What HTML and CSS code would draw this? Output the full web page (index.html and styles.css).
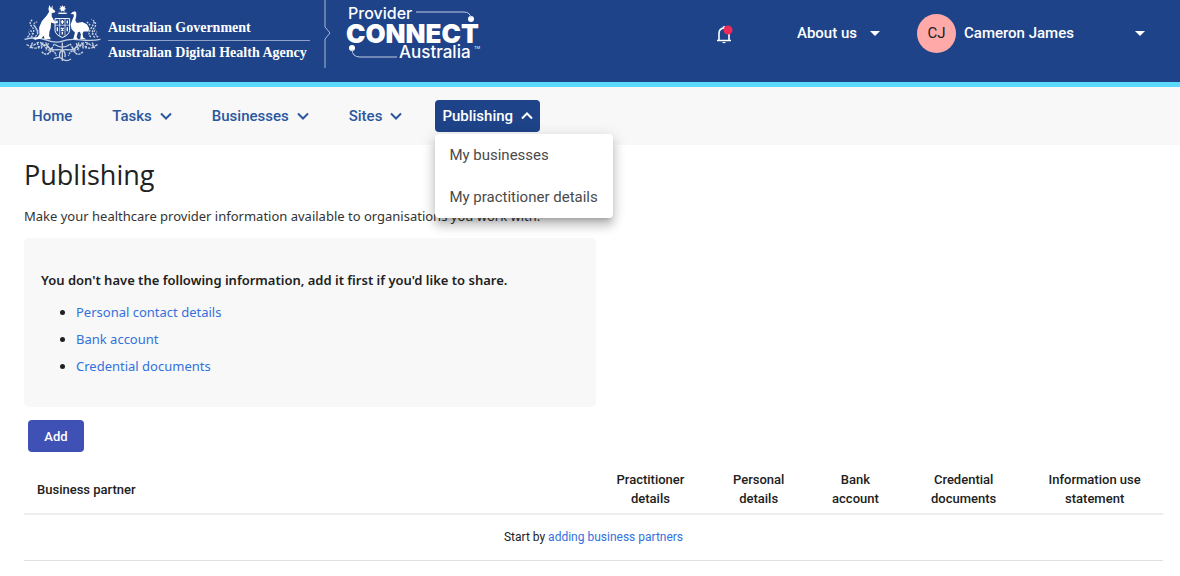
FILE: index.html
```html
<!DOCTYPE html>
<html lang="en">
<head>
  <meta charset="UTF-8" />
  <meta name="viewport" content="width=device-width, initial-scale=1.0" />
  <title>Publishing - Provider Connect Australia</title>
  <link rel="stylesheet" href="styles.css">
</head>
<body>

  <header class="header">
    <a class="agency" href="#">
      <!-- coat of arms -->
      <svg class="arms" viewBox="27 15 231 172" aria-hidden="true">
        <g fill="none" stroke="#fff" stroke-width="4" opacity=".75">
          <path d="M28 119 Q60 108 92 120 T142 124 T196 120 T257 119" />
          <path d="M48 113 Q62 92 50 80 T54 58 M60 110 Q76 98 62 84 T66 66 M36 112 Q48 104 40 96 M54 104 L44 88 M68 100 L58 76" stroke-dasharray="6 3" />
          <path d="M240 113 Q226 98 238 84 T230 58 M228 112 Q218 102 226 90 T238 66 M250 112 Q238 104 246 96 M232 104 L242 88 M216 66 L226 76" stroke-dasharray="6 3" />
          <path d="M34 134 Q48 144 62 132 T90 142 T118 132 M46 142 Q66 150 76 138 T112 152 M52 128 L44 146 M66 128 L72 148 M84 128 L78 148 M100 130 L92 152" stroke-dasharray="8 3" />
          <path d="M248 134 Q236 144 222 132 T194 142 T166 132 M238 142 Q218 150 208 138 T172 152 M232 128 L240 146 M218 128 L212 148 M200 128 L206 148 M184 130 L192 152" stroke-dasharray="8 3" />
          <path d="M92 128 Q98 154 126 150 T150 172 M192 128 Q186 154 158 150 T134 172" />
          <path d="M80 156 Q92 170 104 158 T124 168 M204 156 Q190 170 180 158 T160 168 M98 164 L112 146 M186 164 L172 146" stroke-dasharray="7 2" />
          <path d="M120 134 Q142 150 164 134 M142 128 V184 M116 178 Q130 168 142 178 T168 178" />
        </g>
        <path d="M142 15 l3 5 6-2 -2 6 5 3 -6 2 1 6 -6-3 -6 3 1-6 -6-2 5-3 -2-6 6 2z" fill="#fff" />
        <path d="M130 40 H155" stroke="#fff" stroke-width="4" />
        <path d="M120 56 H164 V92 Q162 106 142 113 Q122 106 120 92z" fill="#1e4388" stroke="#fff" stroke-width="3" />
        <path d="M120 76 H164 M134 56 V108 M150 56 V108" stroke="#fff" stroke-width="2" />
        <path d="M126 62 v8 M142 60 v12 M137 66 h10 M157 62 v9 M127 82 v12 M138 84 l8 8 M146 84 l-8 8 M157 82 v12 M142 96 v8" stroke="#fff" stroke-width="4" />
        <!-- kangaroo -->
        <path d="M103 15 L108 25 L112 16 L113 26 L121 34 L119 38 L110 39 L110 50 L118 64 L127 65 L127 69 L117 71 L108 68 L107 84 L103 96 L102 109 L106 114 L106 118 L88 118 L86 108 L78 116 L60 120 L52 117 L67 112 L73 103 L72 83 L80 64 L95 47 L102 35 L100 26z" fill="#fff" />
        <!-- emu -->
        <path d="M167 42 L173 36 L180 34 L184 38 L184 49 L181 61 L186 69 L202 66 L216 73 L223 85 L221 95 L206 95 L203 102 L205 113 L214 118 L196 118 L198 104 L195 96 L189 97 L185 112 L190 118 L175 118 L180 98 L170 88 L167 74 L172 60 L177 48 L176 43z" fill="#fff" />
      </svg>
      <span class="agency-names">
        <span class="agency-name government">Australian Government</span>
        <span class="agency-name">Australian Digital Health Agency</span>
      </span>
    </a>
    <svg class="divider" viewBox="0 0 8 68" aria-hidden="true">
      <path d="M1 0 V27 L6 33 L1 39 V68" fill="none" stroke="#a9b8d6" />
    </svg>
    <a class="product" href="#">
      <svg class="product-logo" viewBox="0 0 136 68" role="img" aria-label="Provider Connect Australia">
        <g fill="#fff">
          <text class="logo-thin" x="2" y="19">Provider</text>
          <text class="logo-bold" x="0" y="43">CONNECT</text>
          <text class="logo-light" x="53" y="58">Australia</text>
          <text class="logo-tm" x="128" y="49">TM</text>
          <circle cx="125" cy="19" r="3" />
          <circle cx="6" cy="48" r="3" />
        </g>
        <path d="M70 12 H118 Q124 12 125 18 M6 49 Q6 57 14 57 H51" fill="none" stroke="#c3cde2" />
      </svg>
    </a>

    <div class="header-actions">
      <button class="bell" type="button" aria-label="Notifications">
        <svg viewBox="0 -2 18 22" aria-hidden="true">
          <path d="M2 16.500 H16 M4 16 V9.500 Q4 4.500 9 4 Q14 4.500 14 9.500 V16" fill="none" stroke="#fff" stroke-width="1.600" />
          <path d="M7.500 3.500 a1.500 1.500 0 0 1 3 0z M7 18 h4 q-2 2.500 -4 0z" fill="#fff" />
          <circle cx="13" cy="6" r="4.500" fill="#ee2a5b" />
        </svg>
      </button>
      <button class="header-link" type="button">About us <span class="caret"></span></button>
      <button class="user" type="button">
        <span class="avatar">CJ</span>
        <span>Cameron James</span>
        <span class="caret"></span>
      </button>
    </div>
  </header>

  <nav class="nav">
    <ul class="nav-list">
      <li><a class="nav-item" href="#">Home</a></li>
      <li>
        <button class="nav-item" type="button">Tasks
          <svg class="chevron" viewBox="0 0 12 8" aria-hidden="true"><path d="M1 1.500 L6 6.500 L11 1.500" /></svg>
        </button>
      </li>
      <li>
        <button class="nav-item" type="button">Businesses
          <svg class="chevron" viewBox="0 0 12 8" aria-hidden="true"><path d="M1 1.500 L6 6.500 L11 1.500" /></svg>
        </button>
      </li>
      <li>
        <button class="nav-item" type="button">Sites
          <svg class="chevron" viewBox="0 0 12 8" aria-hidden="true"><path d="M1 1.500 L6 6.500 L11 1.500" /></svg>
        </button>
      </li>
      <li class="nav-open">
        <button class="nav-item active" type="button" aria-expanded="true">Publishing
          <svg class="chevron" viewBox="0 0 12 8" aria-hidden="true"><path d="M1 6.500 L6 1.500 L11 6.500" /></svg>
        </button>
        <div class="menu">
          <a href="#">My businesses</a>
          <a href="#">My practitioner details</a>
        </div>
      </li>
    </ul>
  </nav>

  <main class="content">
    <h1>Publishing</h1>
    <p class="intro">Make your healthcare provider information available to organisations you work with.</p>

    <section class="notice">
      <h2>You don't have the following information, add it first if you'd like to share.</h2>
      <ul>
        <li><a href="#">Personal contact details</a></li>
        <li><a href="#">Bank account</a></li>
        <li><a href="#">Credential documents</a></li>
      </ul>
    </section>

    <button class="add-btn" type="button">Add</button>

    <table class="partners">
      <thead>
        <tr>
          <th class="col-partner">Business partner</th>
          <th class="col-practitioner">Practitioner<br>details</th>
          <th class="col-personal">Personal<br>details</th>
          <th class="col-bank">Bank<br>account</th>
          <th class="col-credential">Credential<br>documents</th>
          <th class="col-info">Information use<br>statement</th>
        </tr>
      </thead>
      <tbody>
        <tr>
          <td colspan="6">Start by <a href="#">adding business partners</a></td>
        </tr>
      </tbody>
    </table>
  </main>

</body>
</html>
```
FILE: styles.css
```css
* {
  box-sizing: border-box;
}
body {
  margin: 0;
  font-family: Roboto, sans-serif;
  font-size: 14px;
  color: #212121;
  background: #fff;
}
button {
  font-family: inherit;
  border: none;
  background: none;
  padding: 0;
  cursor: pointer;
}
a {
  color: #3371dc;
  text-decoration: none;
}

/* header */
.header {
  display: flex;
  align-items: flex-start;
  height: 87px;
  padding: 0 35px 0 24px;
  background: #1e4388;
  border-bottom: 5px solid #5cd9ff;
}
.agency {
  display: flex;
  gap: 7px;
  padding-top: 5px;
}
.arms {
  width: 77px;
  height: 57px;
}
.agency-names {
  display: flex;
  flex-direction: column;
  width: 202px;
  padding-top: 11px;
}
.agency-name {
  font: bold 14px/24px "Liberation Serif", serif;
  color: #fff;
  white-space: nowrap;
}
.government {
  border-bottom: 1px solid #8fa1c4;
}
.divider {
  width: 8px;
  height: 68px;
  margin-left: 14px;
}
.product {
  margin-left: 14px;
}
.product-logo {
  display: block;
  width: 136px;
  height: 68px;
  font-family: Inter, sans-serif;
}
.logo-thin {
  font-size: 16px;
  font-weight: 500;
}
.logo-bold {
  font-size: 26px;
  font-weight: 900;
}
.logo-light {
  font-size: 17px;
  font-weight: 500;
}
.logo-tm {
  font-size: 4px;
}
.header-actions {
  display: flex;
  align-items: center;
  margin-left: auto;
  height: 66px;
  color: #fff;
}
.bell {
  width: 18px;
  height: 22px;
  margin-right: 64px;
}
.bell svg {
  display: block;
}
.header-link,
.user {
  display: flex;
  align-items: center;
  color: #fff;
  font-size: 15px;
  font-weight: 500;
}
.header-link {
  gap: 13px;
  margin-right: 37px;
}
.user {
  width: 228px;
  gap: 8px;
}
.user .caret {
  margin-left: auto;
}
.avatar {
  width: 39px;
  height: 39px;
  border-radius: 50%;
  background: #ffa9a9;
  color: #212121;
  font-weight: 400;
  line-height: 39px;
  text-align: center;
}
.caret {
  border: 5px solid transparent;
  border-top-color: #fff;
  border-bottom: none;
}

/* navigation */
.nav {
  padding: 13px 25px;
  background: #f8f8f8;
}
.nav-list {
  display: flex;
  gap: 26px;
  margin: 0;
  padding: 0;
  list-style: none;
}
.nav-item {
  display: flex;
  align-items: center;
  gap: 8px;
  height: 32px;
  padding: 0 7px;
  border-radius: 4px;
  color: #2b579f;
  font-size: 15px;
  font-weight: 500;
}
.nav-item.active {
  background: #1e4388;
  color: #fff;
}
.chevron {
  width: 12px;
  height: 8px;
  fill: none;
  stroke: currentColor;
  stroke-width: 2;
}
.nav-open {
  position: relative;
}
.menu {
  position: absolute;
  top: 34px;
  left: 0;
  min-width: 178px;
  background: #fff;
  border-radius: 4px;
  box-shadow: 0 5px 5px -3px rgba(0, 0, 0, .2), 0 8px 10px 1px rgba(0, 0, 0, .14), 0 3px 14px 2px rgba(0, 0, 0, .12);
}
.menu a {
  display: block;
  padding: 0 14px;
  color: #4a4a4a;
  font-size: 15px;
  line-height: 42px;
  white-space: nowrap;
}

/* page content */
.content {
  padding: 12px 17px 15px 24px;
}
h1 {
  margin: 0;
  font: 400 27px/36px "Open Sans", sans-serif;
}
.intro {
  margin: 13px 0 12px;
  font: 13px/20px "Noto Sans", sans-serif;
  color: #333;
}
.notice {
  max-width: 572px;
  padding: 32px 17px 27px;
  border-radius: 5px;
  background: #f8f8f8;
  font: 13px/20px "Noto Sans", sans-serif;
}
.notice h2 {
  margin: 0 0 9px;
  font-size: 13px;
  font-weight: 600;
}
.notice ul {
  margin: 0;
  padding-left: 35px;
}
.notice li {
  line-height: 27px;
}
.add-btn {
  display: block;
  width: 56px;
  height: 32px;
  margin: 13px 4px;
  border-radius: 4px;
  background: #3f51b5;
  color: #fff;
  font-size: 13px;
  font-weight: 500;
}
.partners {
  width: 100%;
  border-collapse: collapse;
  table-layout: fixed;
  font-size: 13px;
  line-height: 19px;
  text-align: center;
}
.partners th {
  padding: 5px 0;
  font-weight: 500;
  border-bottom: 2px solid #eee;
}
.partners td {
  padding: 13px 0;
  font-size: 12px;
  border-bottom: 1px solid #e0e0e0;
}
.partners .col-partner {
  width: 50%;
  padding-left: 13px;
  text-align: left;
}
.col-practitioner {
  width: 10%;
}
.col-personal {
  width: 9%;
}
.col-bank {
  width: 8%;
}
.col-credential {
  width: 11%;
}
.col-info {
  width: 12%;
}
```
